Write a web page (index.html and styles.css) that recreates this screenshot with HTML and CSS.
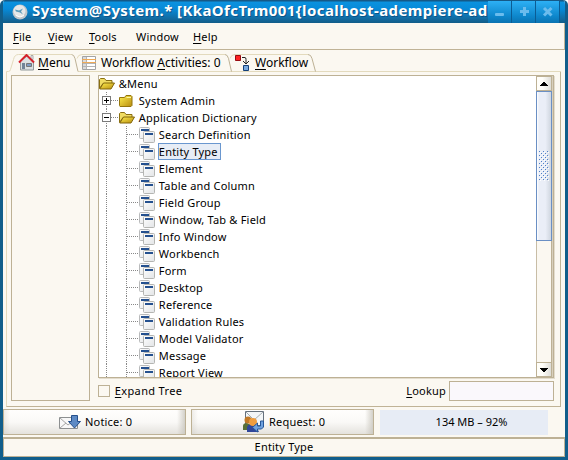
FILE: index.html
```html
<!DOCTYPE html>
<html lang="en">
<head>
<meta charset="utf-8">
<title>System@System</title>
<link rel="stylesheet" href="styles.css">
</head>
<body>
<svg class="defs" width="0" height="0">
  <defs>
    <linearGradient id="gold" x1="0" y1="0" x2="1" y2="1"><stop offset="0" stop-color="#fff04e"/><stop offset="1" stop-color="#b78b10"/></linearGradient>
    <linearGradient id="silver" x1="0" y1="0" x2="1" y2="1"><stop offset="0" stop-color="#fff"/><stop offset="1" stop-color="#e2e4e6"/></linearGradient>
    <symbol id="open" viewBox="0 0 16 12">
      <path d="M.5 10.500v-9l1-1h4l1.500 2h6v3h-9z" fill="#f0dc62" stroke="#8a6f12"/>
      <path d="M.8 11l3.700-6h11l-3.500 6z" fill="url(#gold)" stroke="#80650b"/>
    </symbol>
    <symbol id="closed" viewBox="0 0 14 12">
      <path d="M.5 10.500v-8h5l1.500-2h5l1 1v9l-1 1h-11z" fill="url(#gold)" stroke="#94750d"/>
      <path d="M7.500 2.500h4.500" stroke="#fff8a4"/>
    </symbol>
    <symbol id="win" viewBox="0 0 16 16">
      <rect x=".5" y=".5" width="10" height="11" rx="1" fill="url(#silver)" stroke="#b9babb"/>
      <path d="M2 3h8" stroke="#24508f" stroke-width="2"/>
      <rect x="4.500" y="4.500" width="11" height="11" rx="1" fill="url(#silver)" stroke="#b4b5b2"/>
      <path d="M6 7h8" stroke="#24508f" stroke-width="2"/>
    </symbol>
  </defs>
</svg>
<div class="window">
  <header class="title">
    <svg class="globe" width="16" height="16" viewBox="0 0 16 16"><circle cx="8" cy="8" r="7.500" fill="#c0c6ca"/><circle cx="7.500" cy="7" r="6" fill="#e6e8e8"/><path d="M3 5.500l4 1 4-2-2 3 2 3-3-2-4-1z" fill="#5d9bb9"/><path d="M4 11.500q4 3 8 0" stroke="#fff" fill="none"/></svg>
    <span class="caption">System@System.* [KkaOfcTrm001{localhost-adempiere-ad</span>
    <div class="controls">
      <span><svg width="12" height="12"><rect x="1" y="7" width="9" height="3" rx="1" fill="#6bbced"/></svg></span>
      <span><svg width="12" height="12"><path d="M2 5.500h9M6.500 1v9" stroke="#6bbced" stroke-width="3"/></svg></span>
      <span><svg width="12" height="12"><path d="M2 2l7.500 7.500M9.500 2L2 9.500" stroke="#6bbced" stroke-width="3"/></svg></span>
    </div>
  </header>
  <nav class="menubar">
    <span class="m1"><u>F</u>ile</span><span class="m2"><u>V</u>iew</span><span class="m3"><u>T</u>ools</span><span class="m4">Window</span><span class="m5"><u>H</u>elp</span>
  </nav>
  <main class="work">
    <div class="tabs">
      <svg class="outline" width="559" height="20" viewBox="0 0 559 20">
        <g fill="none" stroke="#e3dabd">
          <path d="M.5 20v-1.500h2q1.500 0 2-2l3-10q1-5 5-5h53"/><path d="M71 5.500q1-4 5-4h143M224 5.500q1-4 5-4h73"/>
          <path d="M72 18.500h483"/>
        </g>
        <g fill="none" stroke="#bdb195"><path d="M65.500 1.500q2.500 0 3.500 4l3 13M219 1.500q2.500 0 3.500 4l3 13M302 1.500q3 0 4 4l3.500 13"/></g>
      </svg>
      <div class="tab t1"><svg width="17" height="17" viewBox="0 0 17 17"><path d="M2.500 7v9h13V7L9 2z" fill="#dbe0e2" stroke="#92999b"/><path d="M13 1.500h2v4h-2z" fill="#eee" stroke="#aaa"/><path d="M1 8.500L8.500 1 16 8.500" fill="none" stroke="#d5212b" stroke-width="2"/><path d="M4 9h3v6H4z" fill="#718397"/><path d="M8.500 9.500h5v3h-5z" fill="#7e9cc5" stroke="#777"/></svg><span><u>M</u>enu</span></div>
      <div class="tab t2"><svg width="14" height="14" viewBox="0 0 14 14"><path d="M.5.500h13v13H.5z" fill="#fff" stroke="#a3a3a3"/><path d="M1 1h3v12H1z" fill="#dadada"/><path d="M4.500 1v12M1 7.500h12M1 10.500h12" stroke="#b4b4b4"/><path d="M0 3.500h14M0 6.500h14" stroke="#efaa56"/></svg><span>Workflow <u>A</u>ctivities: 0</span></div>
      <div class="tab t3"><svg width="16" height="16" viewBox="0 0 16 16"><path d="M.5.500h5v5h-5z" fill="#f22" stroke="#980b11"/><path d="M8.500 10.500h5v5h-5z" fill="#78a9e0" stroke="#123f78"/><path d="M7 2.500h3q1 0 1 2v4M8 6l3 3 3-3" fill="none" stroke="#222"/></svg><span><u>W</u>orkflow</span></div>
    </div>
    <section class="pane">
      <aside class="side"></aside>
      <div class="content">
        <div class="treebox">
          <ul class="tree">
            <li class="root"><svg width="16" height="12"><use href="#open"/></svg><span>&amp;Menu</span></li>
            <li class="branch"><i class="toggle plus"></i><b></b><svg class="cf" width="14" height="12"><use href="#closed"/></svg><span>System Admin</span></li>
            <li class="branch"><i class="toggle"></i><b></b><svg width="16" height="12"><use href="#open"/></svg><span>Application Dictionary</span></li>
            <li class="leaf"><svg width="16" height="16"><use href="#win"/></svg><span>Search Definition</span></li>
            <li class="leaf"><svg width="16" height="16"><use href="#win"/></svg><span class="selected">Entity Type</span></li>
            <li class="leaf"><svg width="16" height="16"><use href="#win"/></svg><span>Element</span></li>
            <li class="leaf"><svg width="16" height="16"><use href="#win"/></svg><span>Table and Column</span></li>
            <li class="leaf"><svg width="16" height="16"><use href="#win"/></svg><span>Field Group</span></li>
            <li class="leaf"><svg width="16" height="16"><use href="#win"/></svg><span>Window, Tab &amp; Field</span></li>
            <li class="leaf"><svg width="16" height="16"><use href="#win"/></svg><span>Info Window</span></li>
            <li class="leaf"><svg width="16" height="16"><use href="#win"/></svg><span>Workbench</span></li>
            <li class="leaf"><svg width="16" height="16"><use href="#win"/></svg><span>Form</span></li>
            <li class="leaf"><svg width="16" height="16"><use href="#win"/></svg><span>Desktop</span></li>
            <li class="leaf"><svg width="16" height="16"><use href="#win"/></svg><span>Reference</span></li>
            <li class="leaf"><svg width="16" height="16"><use href="#win"/></svg><span>Validation Rules</span></li>
            <li class="leaf"><svg width="16" height="16"><use href="#win"/></svg><span>Model Validator</span></li>
            <li class="leaf"><svg width="16" height="16"><use href="#win"/></svg><span>Message</span></li>
            <li class="leaf"><svg width="16" height="16"><use href="#win"/></svg><span>Report View</span></li>
          </ul>
          <div class="scroll">
            <div class="arrow"><svg width="8" height="4" shape-rendering="crispEdges"><path d="M3 0h2v1h1v1h1v1h1v1H0V3h1V2h1V1h1z"/></svg></div>
            <div class="thumb"><svg width="10" height="30"><defs><pattern id="dots" width="4" height="4" patternUnits="userSpaceOnUse"><path d="M0 0h1v1H0zM2 2h1v1H2z" fill="#4f80c8"/><path d="M1 1h1v1H1zM3 3h1v1H3z" fill="#fff"/></pattern></defs><rect width="10" height="30" fill="url(#dots)" shape-rendering="crispEdges"/></svg></div>
            <div class="arrow down"><svg width="8" height="4" shape-rendering="crispEdges"><path d="M0 0h8v1H7v1H6v1H5v1H3V3H2V2H1V1H0z"/></svg></div>
          </div>
        </div>
        <div class="lookup"><i class="check"></i><span class="expand"><u>E</u>xpand Tree</span><span class="look"><u>L</u>ookup</span><i class="field"></i></div>
      </div>
    </section>
  </main>
  <footer class="actions">
    <div class="button b1"><svg width="22" height="16" viewBox="0 0 22 16"><path d="M.5 3.500h18v11H.5z" fill="#f8f8f8" stroke="#8d9091"/><path d="M1 4l8 7 9-7M1 14l6-5" fill="none" stroke="#a5a5a5"/><path d="M12.500 1.500h6v6h3L15.500 14l-6-6.500h3z" fill="#5d8ac5" stroke="#254f8b"/></svg><span>Notice: 0</span></div>
    <div class="button b2"><svg width="22" height="22" viewBox="0 0 22 22"><path d="M2.500.500h18v14h-18z" fill="#f3f6f8" stroke="#66717d"/><path d="M3 1l8 8 9-8" fill="none" stroke="#a4acb0"/><path d="M0 15q0-3 4-3l4 2v5H0z" fill="#587039"/><circle cx="5" cy="9" r="3.500" fill="#c37a27"/><path d="M4 21v-5q2-4 8-3l4 8z" fill="#30469a"/><circle cx="10" cy="11" r="4" fill="#ef9d3f"/><path d="M9.500 16.500l5-4.500v3h3v-5h3v6l-2 2h-4v3z" fill="#70a2df" stroke="#275799"/></svg><span>Request: 0</span></div>
    <div class="memory">134 MB – 92%</div>
  </footer>
  <div class="status">Entity Type</div>
</div>
</body>
</html>
```
FILE: styles.css
```css
* { box-sizing: border-box; }
body { margin: 0; background: #fff; font: 11px/17px "Noto Sans", sans-serif; color: #000; letter-spacing: .2px; }
.defs { position: absolute; }
svg { display: block; flex: none; }
span { white-space: nowrap; }
u { text-decoration: underline; text-decoration-thickness: 1px; text-underline-offset: 2px; text-decoration-skip-ink: none; }
.window { width: 568px; height: 460px; border: solid #115e8b; border-width: 0 3px 3px; border-radius: 5px 5px 0 0; overflow: hidden; background: #fbf8f1; display: flex; flex-direction: column; }
.title { height: 23px; margin: 0 -3px; padding-left: 12px; display: flex; align-items: center; flex: none; background: linear-gradient(#155987 0, #155987 1px, #0b92df 2px, #078ad8 9px, #126da4 18px, #115d89 23px); }
.caption { width: 456px; margin: -2px 0 0 4px; overflow: hidden; color: #fff; font: bold 15px/21px "Noto Sans", sans-serif; letter-spacing: .4px; text-shadow: 1px 1px #0b5488; }
.controls { display: flex; height: 22px; gap: 1px; }
.controls span { width: 23px; display: flex; align-items: center; justify-content: center; background: linear-gradient(#2db0f5, #0d86cb 70%, #0b73b1); box-shadow: 1px 0 #0b5c94; }
.menubar { height: 27px; flex: none; display: flex; align-items: center; border: solid #c0b396; border-width: 0 1px 1px 0; }
.m1 { margin-left: 10px; width: 35px; }
.m2 { width: 41px; }
.m3 { width: 47px; }
.m4 { width: 57px; }
.work { height: 357px; flex: none; padding: 3px 3px 0; }
.tabs { height: 19px; position: relative; display: flex; }
.outline { position: absolute; left: 0; top: 0; }
.tab { display: flex; align-items: center; position: relative; height: 19px; font-size: 12px; letter-spacing: 0; }
.t1 { margin-left: 12px; width: 64px; gap: 3px; }
.t1 span { margin-top: -1px; }
.t2 { width: 153px; gap: 5px; }
.t3 { gap: 4px; }
.pane { height: 335px; margin-right: 1px; padding: 3px 6px 5px 4px; border: solid; border-width: 0 1px 1px; border-color: #e3dabd #c0b396 #c0b396 #e3dabd; display: flex; gap: 8px; }
.side { width: 79px; height: 326px; border: 1px solid #bdb195; }
.content { width: 457px; }
.treebox { height: 303px; border: 1px solid #bdb195; background: #fff; display: flex; justify-content: space-between; box-shadow: 1px 1px #e3dccd; }
.tree { list-style: none; margin: -1px 0 0; padding: 0; width: 430px; height: 302px; overflow: hidden; }
.tree li { height: 17px; display: flex; align-items: center; gap: 4px; }
.tree .branch { padding-left: 3px; gap: 0; background: repeating-linear-gradient(#888 0 1px, transparent 1px 2px) 7px 0 / 1px 17px no-repeat; }
.toggle { width: 9px; height: 9px; flex: none; border: 1px solid #7b7b7b; background: linear-gradient(#000, #000) 1px 3px / 5px 1px no-repeat, #fff; }
.toggle.plus { background: linear-gradient(#000, #000) 1px 3px / 5px 1px no-repeat, linear-gradient(#000, #000) 3px 1px / 1px 5px no-repeat, #fff; }
.branch b { width: 8px; height: 1px; background: repeating-linear-gradient(90deg, #888 0 1px, transparent 1px 2px); }
.branch span { margin-left: 4px; }
.branch .cf { margin-right: 2px; }
.tree .leaf { padding-left: 40px; gap: 3px; background: repeating-linear-gradient(#888 0 1px, transparent 1px 2px) 7px 0 / 1px 17px no-repeat, repeating-linear-gradient(#888 0 1px, transparent 1px 2px) 27px 0 / 1px 17px no-repeat, repeating-linear-gradient(90deg, #888 0 1px, transparent 1px 2px) 28px 8px / 12px 1px no-repeat; }
.leaf span { height: 17px; line-height: 16px; border: 1px solid transparent; }
.leaf .selected { background: #e7edf6; border-color: #6a97cf; padding-right: 2px; }
.scroll { width: 17px; height: 301px; display: flex; flex-direction: column; border-right: 1px solid #d8cfbd; border-left: 1px solid #c8bda6; background: #fbf8f1; box-shadow: inset -1px 0 #bdb195; }
.arrow { width: 16px; height: 15px; margin-left: -1px; border: 1px solid #bdb195; display: flex; align-items: center; justify-content: center; background: linear-gradient(90deg, #fffef9 40%, #deddd8); }
.arrow.down { margin-top: auto; }
.thumb { width: 16px; height: 150px; margin-left: -1px; border: 1px solid #6a8fc4; display: flex; align-items: center; justify-content: center; background: linear-gradient(90deg, #fff 0, #eaeef7 2px, #eaeef7 60%, #cfd6df); }
.lookup { display: flex; align-items: center; height: 20px; margin-top: 3px; }
.lookup span { margin-top: -1px; }
.check { width: 12px; height: 12px; border: 1px solid #bdb195; }
.expand { margin-left: 5px; letter-spacing: .35px; }
.look { margin-left: auto; margin-right: 3px; }
.field { width: 105px; height: 20px; border: 1px solid #bdb195; background: #faf8fc; }
.actions { height: 29px; flex: none; display: flex; padding-top: 2px; }
.button { width: 183px; height: 26px; border: 1px solid #bdb195; display: flex; align-items: center; background: linear-gradient(90deg, rgba(200,197,188,.3), transparent 6px, transparent 173px, rgba(200,197,188,.8)), linear-gradient(#fffefd, #faf9f7 50%, #e4e2dd); }
.button span { margin-top: -1px; }
.b1 { padding-left: 55px; gap: 4px; }
.b2 { margin-left: 5px; padding-left: 51px; gap: 4px; }
.memory { width: 168px; height: 25px; margin: 1px 0 0 6px; padding-left: 15px; background: #e7ecf5; text-align: center; line-height: 24px; letter-spacing: 0; }
.status { height: 20px; flex: none; margin-top: 1px; border: 1px solid #bdb195; border-top-width: 2px; text-align: center; line-height: 16px; }
```
